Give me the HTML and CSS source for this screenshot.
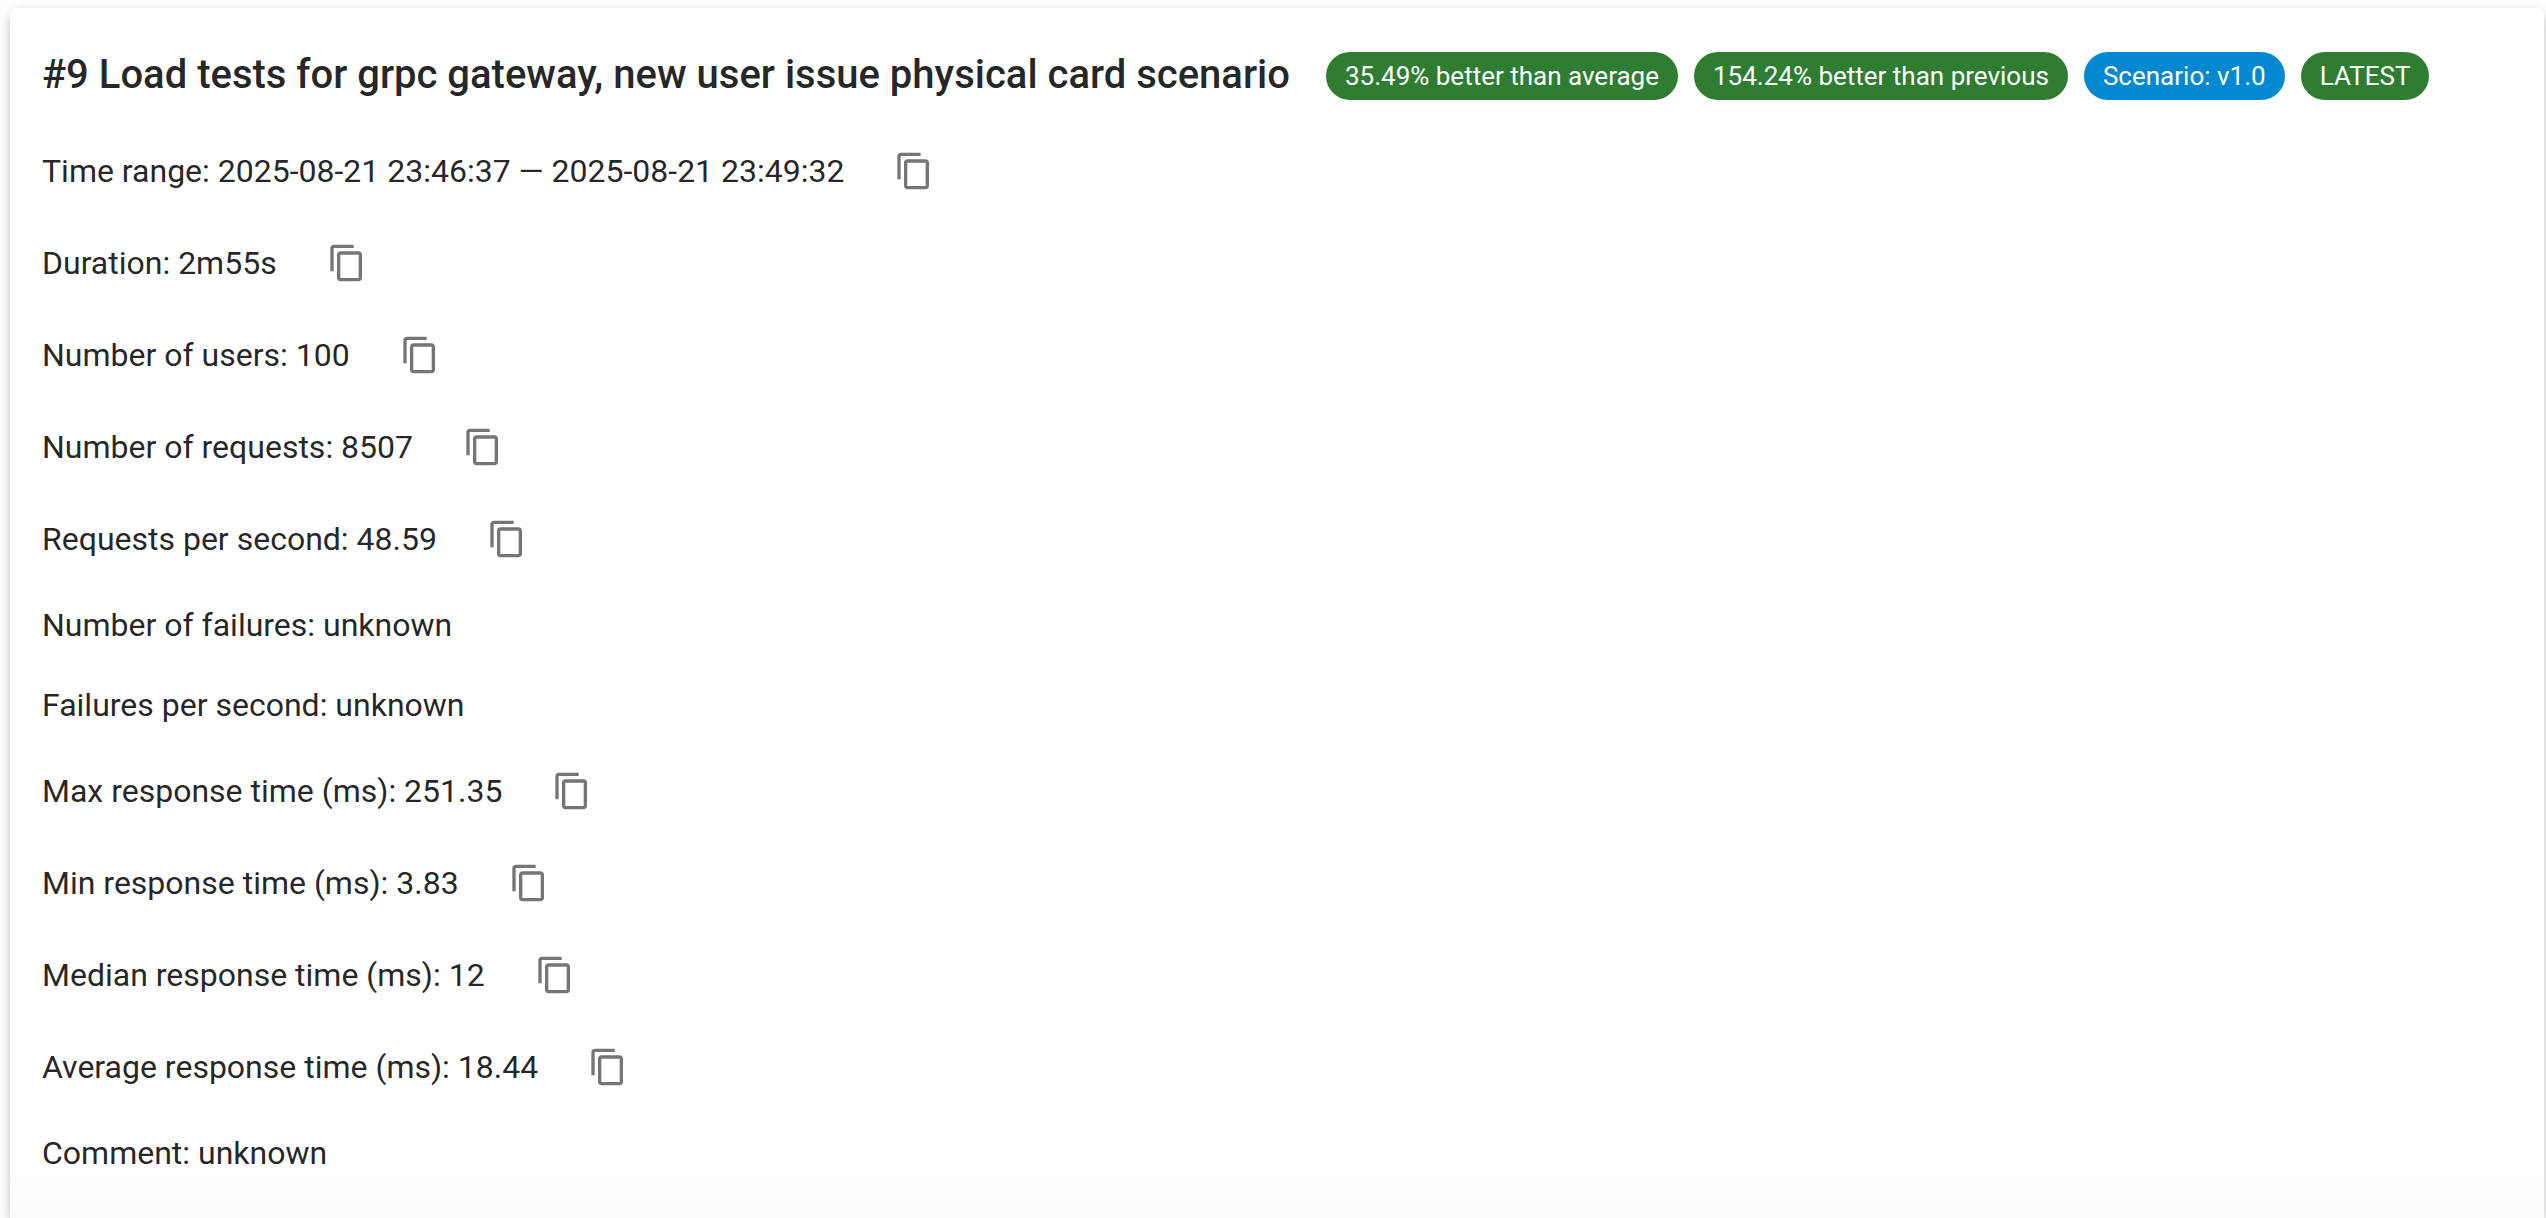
FILE: index.html
```html
<!DOCTYPE html>
<html lang="en">
<head>
<meta charset="utf-8">
<title>Load test report</title>
<link rel="stylesheet" href="styles.css">
</head>
<body>
<svg class="sprite" aria-hidden="true">
  <symbol id="copy" viewBox="0 0 24 24"><path d="M16 1H4c-1.1 0-2 .9-2 2v14h2V3h12V1zm3 4H8c-1.1 0-2 .9-2 2v14c0 1.1.9 2 2 2h11c1.1 0 2-.9 2-2V7c0-1.1-.9-2-2-2zm0 16H8V7h11v14z"/></symbol>
</svg>
<main class="card">
  <header class="card-header">
    <h1 class="title">#9 Load tests for grpc gateway, new user issue physical card scenario</h1>
    <div class="chips">
      <span class="chip chip-success">35.49% better than average</span>
      <span class="chip chip-success">154.24% better than previous</span>
      <span class="chip chip-info">Scenario: v1.0</span>
      <span class="chip chip-success">LATEST</span>
    </div>
  </header>
  <ul class="details">
    <li class="row"><span>Time range: 2025-08-21 23:46:37 — 2025-08-21 23:49:32</span><button class="copy" type="button" aria-label="Copy time range"><svg class="icon"><use href="#copy"/></svg></button></li>
    <li class="row"><span>Duration: 2m55s</span><button class="copy" type="button" aria-label="Copy duration"><svg class="icon"><use href="#copy"/></svg></button></li>
    <li class="row"><span>Number of users: 100</span><button class="copy" type="button" aria-label="Copy number of users"><svg class="icon"><use href="#copy"/></svg></button></li>
    <li class="row"><span>Number of requests: 8507</span><button class="copy" type="button" aria-label="Copy number of requests"><svg class="icon"><use href="#copy"/></svg></button></li>
    <li class="row"><span>Requests per second: 48.59</span><button class="copy" type="button" aria-label="Copy requests per second"><svg class="icon"><use href="#copy"/></svg></button></li>
    <li class="row"><span>Number of failures: unknown</span></li>
    <li class="row"><span>Failures per second: unknown</span></li>
    <li class="row"><span>Max response time (ms): 251.35</span><button class="copy" type="button" aria-label="Copy max response time"><svg class="icon"><use href="#copy"/></svg></button></li>
    <li class="row"><span>Min response time (ms): 3.83</span><button class="copy" type="button" aria-label="Copy min response time"><svg class="icon"><use href="#copy"/></svg></button></li>
    <li class="row"><span>Median response time (ms): 12</span><button class="copy" type="button" aria-label="Copy median response time"><svg class="icon"><use href="#copy"/></svg></button></li>
    <li class="row"><span>Average response time (ms): 18.44</span><button class="copy" type="button" aria-label="Copy average response time"><svg class="icon"><use href="#copy"/></svg></button></li>
    <li class="row"><span>Comment: unknown</span></li>
  </ul>
</main>
</body>
</html>
```
FILE: styles.css
```css
* {
  box-sizing: border-box;
}

body {
  margin: 0;
  min-height: 100vh;
  padding: 8px 2px 0 10px;
  display: flex;
  overflow: hidden;
  background: #fff;
  color: rgba(0, 0, 0, 0.87);
  font-family: Roboto, "Liberation Sans", sans-serif;
  font-size: 32px;
  line-height: 48px;
}

.sprite {
  display: none;
}

.card {
  flex: 1;
  min-width: 0;
  padding: 35px 32px 40px;
  border-radius: 8px 8px 0 0;
  background: linear-gradient(to top, #fafafa, #fff 48px);
  box-shadow:
    0 6px 6px -4px rgba(0, 0, 0, 0.2),
    0 6px 8px 0 rgba(0, 0, 0, 0.14),
    0 2px 16px 0 rgba(0, 0, 0, 0.12);
}

.card-header {
  display: flex;
  flex-wrap: wrap;
  align-items: center;
  column-gap: 36px;
  margin-bottom: 32px;
}

.title {
  margin: 0;
  padding-bottom: 2px;
  font-size: 40px;
  font-weight: 500;
  line-height: 64px;
}

.chips {
  display: flex;
  flex-wrap: wrap;
  gap: 16px;
}

.chip {
  height: 48px;
  padding: 0 19px;
  border-radius: 24px;
  color: #fff;
  font-size: 26px;
}

.chip-success {
  background: #2e7d32;
}

.chip-info {
  background: #0288d1;
}

.details {
  display: flex;
  flex-direction: column;
  gap: 32px;
  margin: 0;
  padding: 0;
  list-style: none;
}

.row {
  display: flex;
  align-items: center;
  gap: 40px;
}

.copy {
  display: flex;
  padding: 10px;
  border: 0;
  border-radius: 50%;
  background: transparent;
  color: rgba(0, 0, 0, 0.54);
  cursor: pointer;
}

.icon {
  width: 40px;
  height: 40px;
  fill: currentColor;
}
```
